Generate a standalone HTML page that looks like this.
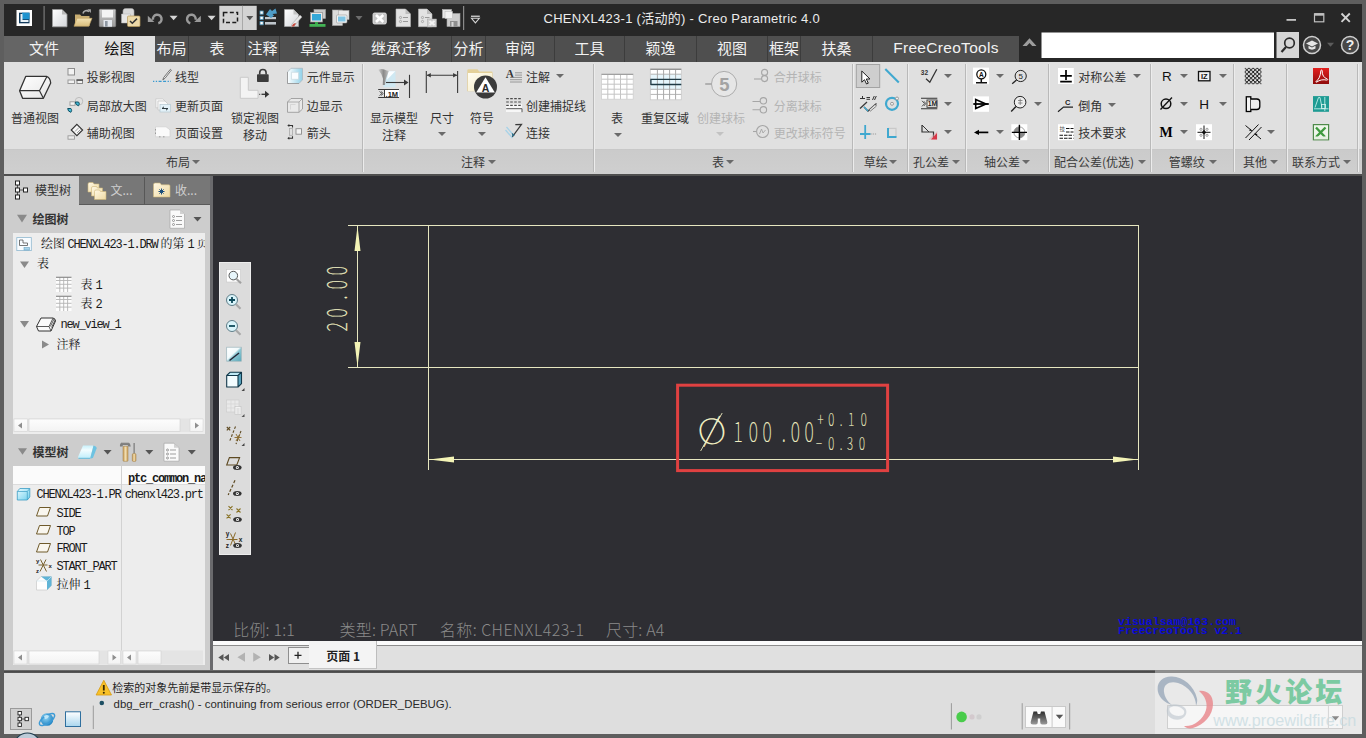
<!DOCTYPE html>
<html lang="zh-CN">
<head>
<meta charset="utf-8">
<title>CHENXL423-1 - Creo Parametric 4.0</title>
<style>
html,body{margin:0;padding:0;}
body{width:1366px;height:738px;overflow:hidden;background:#5e5e5e;position:relative;
 font-family:"Noto Sans CJK SC","Liberation Sans",sans-serif;font-size:12px;color:#222;}
.a{position:absolute;}
.t{position:absolute;white-space:nowrap;line-height:1;}
.ui{font-family:"Noto Sans CJK SC","Liberation Sans",sans-serif;}
.lat{font-family:"Liberation Sans","Noto Sans CJK SC",sans-serif;}
.song{font-family:"Liberation Mono","Noto Serif CJK SC",serif;}
svg{position:absolute;overflow:visible;}
/* title bar */
#title{left:4px;top:4px;width:1358px;height:58px;background:#272727;}
#tabs{left:4px;top:36px;width:1015px;height:26px;background:#4f4f4f;}
.tab{position:absolute;top:0;height:26px;color:#f2f2f2;font-size:15px;line-height:23.5px;text-align:center;white-space:nowrap;border-left:1px solid #3c3c3c;box-sizing:border-box;}
.tab.on{background:#e0e0e0;color:#111;border-left:none;}
/* ribbon */
#ribbon{left:4px;top:62px;width:1358px;height:87px;background:#e0e0e0;}
#rlabel{left:4px;top:149px;width:1358px;height:24.8px;background:linear-gradient(#c6c6c6 0,#cbcbcb 1.5px,#cfcfcf);}
#gap{left:4px;top:173.8px;width:1358px;height:2.2px;background:#4f4f4f;}
.sep{position:absolute;top:64px;width:1px;height:108px;background:#b9b9b9;}
.rt{position:absolute;white-space:nowrap;line-height:1;font-size:12px;color:#333;margin-top:.6px;}
.rt.dis{color:#b4b4b4;}
.gl{position:absolute;white-space:nowrap;line-height:1;font-size:12px;color:#3a3a3a;top:155.5px;}
.dd{position:absolute;width:0;height:0;border-left:4px solid transparent;border-right:4px solid transparent;border-top:4px solid #6a6a6a;}
.dds{position:absolute;width:0;height:0;border-left:3.5px solid transparent;border-right:3.5px solid transparent;border-top:4px solid #777;}
/* left panel */
#panel{left:4px;top:176px;width:205.5px;height:494px;background:#cdcdcd;}
.tree{position:absolute;background:#ededed;}
.tr{position:absolute;white-space:nowrap;line-height:1;font-size:12px;color:#1a1a1a;}
.mono{font-family:"Liberation Mono",monospace;letter-spacing:-1.2px;font-size:12px;}
/* drawing */
#draw{left:213.3px;top:176px;width:1148.7px;height:465px;background:#2e2e33;}
#sheet{left:213.3px;top:641px;width:1148.7px;height:29px;background:linear-gradient(#fbfbfb 0,#fbfbfb 3.7px,#8c8c8c 3.7px,#8c8c8c 5px,#e0e0e0 5px);}
#status{left:4px;top:673px;width:1358px;height:61px;background:#dedede;}
#hline{left:4px;top:669.8px;width:1358px;height:3.2px;background:linear-gradient(#7a7a7a,#484848 45%,#5a5a5a);}
</style>
</head>
<body>
<!-- TITLE BAR -->
<div class="a" id="title"></div>
<div class="t lat" style="left:543.5px;top:11.5px;font-size:13px;letter-spacing:.29px;color:#ececec;">CHENXL423-1 (活动的) - Creo Parametric 4.0</div>

<!--TITLE-ICONS-START-->
<svg class="a" style="left:0;top:0" width="1366" height="62" viewBox="0 0 1366 62">
 <defs>
  <linearGradient id="gpage" x1="0" y1="0" x2="1" y2="1"><stop offset="0" stop-color="#ffffff"/><stop offset="1" stop-color="#d4d6da"/></linearGradient>
  <linearGradient id="gfold" x1="0" y1="0" x2="0" y2="1"><stop offset="0" stop-color="#f3e2b3"/><stop offset="1" stop-color="#d9bd7c"/></linearGradient>
  <linearGradient id="gflop" x1="0" y1="0" x2="0" y2="1"><stop offset="0" stop-color="#c9c9c9"/><stop offset="1" stop-color="#9a9a9a"/></linearGradient>
 </defs>
 <!-- app icon -->
 <rect x="16.5" y="10" width="15.5" height="16" fill="#fdfdfd"/>
 <rect x="19" y="12.7" width="10.5" height="10.6" fill="#113a5c"/>
 <rect x="22" y="12.7" width="7.5" height="6.6" fill="#1f93cf"/>
 <path d="M20.5 14v8h8v-2h-6v-6z" fill="#e9f2f8"/>
 <rect x="43.5" y="6" width="1.2" height="24" fill="#7a7a7a"/>
 <!-- new -->
 <path d="M52.5 9.5h9.5l5 5v12.3h-14.5z" fill="url(#gpage)" stroke="#9c9c9c" stroke-width=".8"/>
 <path d="M62 9.5v5h5z" fill="#b9b9b9"/>
 <!-- open -->
 <path d="M75 14.5h5l1.5 1.5h8v10h-14.5z" fill="#c9ae72"/>
 <path d="M74 26.3l3-8h15l-3.2 8z" fill="url(#gfold)" stroke="#c2a565" stroke-width=".6"/>
 <path d="M83 13.5c.5-3 4-3.8 6-1.8" fill="none" stroke="#a9a9a9" stroke-width="1.6"/>
 <path d="M87.3 9.3h3.6v3.6z" fill="#a9a9a9"/>
 <!-- save -->
 <rect x="99.3" y="9.3" width="16.4" height="17.4" rx="1" fill="url(#gflop)" stroke="#8a8a8a" stroke-width=".6"/>
 <rect x="102" y="10" width="11" height="7.5" fill="#f4f4f4"/>
 <rect x="103.5" y="20" width="8.5" height="6.7" fill="#e4e8ee"/>
 <rect x="105" y="21" width="2.6" height="5.7" fill="#8f98a3"/>
 <!-- save copy -->
 <path d="M123 11c0-1.500 1-2.500 2.500-2.500h6c1.500 0 2.500 1 2.500 2.500v9h-11z" fill="#d9d9d9" stroke="#a8a8a8" stroke-width=".6"/>
 <path d="M121.500 14h9v9h-9z" fill="#e6e6e6" stroke="#b0b0b0" stroke-width=".5"/>
 <rect x="127.500" y="16" width="12.500" height="10.500" rx="1" fill="#ecd9a8" stroke="#b79a5a" stroke-width=".7"/>
 <path d="M130 21l2.300 2.300l4.700-4.700" fill="none" stroke="#333" stroke-width="1.500"/>
 <!-- undo -->
 <path d="M153 19.800A4.300 4.300 0 1 1 158.300 23.200" fill="none" stroke="#9a9a9a" stroke-width="2.500"/>
 <path d="M147.800 15.800v6.200h6.600z" fill="#9a9a9a"/>
 <path d="M169.600 15.800h8l-4 4.500z" fill="#d6d6d6"/>
 <!-- redo -->
 <path d="M195.600 19.800A4.300 4.300 0 1 0 190.300 23.200" fill="none" stroke="#9a9a9a" stroke-width="2.500"/>
 <path d="M200.800 15.800v6.200h-6.600z" fill="#9a9a9a"/>
 <path d="M207.600 15.800h8l-4 4.500z" fill="#d6d6d6"/>
 <!-- select box -->
 <rect x="219.300" y="5.800" width="37.400" height="24.200" fill="#d3d3d3"/>
 <rect x="242" y="5.800" width="1" height="24.200" fill="#a9a9a9"/>
 <rect x="223.500" y="12.500" width="14" height="10" fill="none" stroke="#1d1d1d" stroke-width="1.500" stroke-dasharray="4 2.300"/>
 <path d="M246.300 16h7l-3.500 4.200z" fill="#555"/>
 <!-- regen -->
 <g>
  <rect x="260" y="11" width="3.200" height="3.200" fill="#fff" stroke="#4a8fb5" stroke-width=".8"/>
  <rect x="260" y="16.300" width="3.200" height="3.200" fill="#fff" stroke="#4a8fb5" stroke-width=".8"/>
  <rect x="260" y="21.600" width="3.200" height="3.200" fill="#fff" stroke="#4a8fb5" stroke-width=".8"/>
  <rect x="265" y="17" width="11" height="2.200" fill="#bfc6cc"/>
  <rect x="265" y="22" width="11" height="2.600" fill="#bfc6cc"/>
  <path d="M266 14.500l4-5.500l2 2l3.500-2.500l1.500 5l-4.500.5l1.500 1.500l-3 2.500z" fill="#4e9cc6"/>
 </g>
 <!-- doc pen -->
 <path d="M284.500 9.500h9l5 5v12h-14z" fill="url(#gpage)" stroke="#a5a5a5" stroke-width=".7"/>
 <path d="M293.500 9.500v5h5z" fill="#c4c4c4"/>
 <path d="M292 24l8-9l2 2l-8 9l-3 1z" fill="#e8e8e8" stroke="#999" stroke-width=".5"/>
 <path d="M291.500 26.500c1.500-3 3-4 4.500-3l-2 3z" fill="#c6493c"/>
 <!-- monitor -->
 <rect x="314" y="9.500" width="11.500" height="9" fill="#c9c9c9" stroke="#a2a2a2" stroke-width=".6"/>
 <rect x="310.500" y="12.500" width="12" height="9.500" fill="#e9e9e9" stroke="#8f8f8f" stroke-width=".7"/>
 <rect x="312" y="14" width="9" height="6.500" fill="#35a8d8"/>
 <rect x="315" y="22" width="3" height="2" fill="#3aa84a"/>
 <rect x="309.500" y="24" width="16" height="2.800" fill="#43b455"/>
 <!-- windows -->
 <rect x="332.500" y="10" width="10" height="15.500" fill="#dcdcdc" stroke="#aaa" stroke-width=".6"/>
 <rect x="338.500" y="10.500" width="10.500" height="9" fill="#e9e9e9" stroke="#aaa" stroke-width=".6"/>
 <rect x="336.500" y="15" width="10.500" height="8" rx="1" fill="#f4f4f4" stroke="#999" stroke-width=".6"/>
 <rect x="338" y="16.500" width="7.500" height="5" fill="#7fc4e4"/>
 <path d="M355.500 16h7l-3.500 4.200z" fill="#6c6c6c"/>
 <!-- x box -->
 <rect x="373" y="13" width="13.300" height="11" rx="1.500" fill="#c4c4c4" stroke="#ededed" stroke-width=".8"/>
 <path d="M376 15l7.300 7M383.300 15l-7.300 7" stroke="#fff" stroke-width="2.600"/>
 <!-- doc list -->
 <path d="M396 9h9.500l5 5v12.700h-14.500z" fill="#e2e2e2" stroke="#b5b5b5" stroke-width=".6"/>
 <path d="M405.500 9v5h5z" fill="#bdbdbd"/>
 <circle cx="400.500" cy="17.500" r="1.100" fill="none" stroke="#888" stroke-width=".6"/><rect x="403" y="17" width="5" height="1" fill="#999"/>
 <circle cx="400.500" cy="21.500" r="1.100" fill="none" stroke="#888" stroke-width=".6"/><rect x="403" y="21" width="5" height="1" fill="#999"/>
 <!-- doc2 -->
 <path d="M418.500 9h8.500l5 5v12.700h-13.500z" fill="#e2e2e2" stroke="#b5b5b5" stroke-width=".6"/>
 <path d="M427 9v5h5z" fill="#bdbdbd"/>
 <circle cx="422.500" cy="17.500" r="1.100" fill="none" stroke="#888" stroke-width=".6"/><rect x="425" y="17" width="4.500" height="1" fill="#999"/>
 <circle cx="422.500" cy="21.500" r="1.100" fill="none" stroke="#888" stroke-width=".6"/>
 <rect x="427.500" y="19" width="9" height="8" fill="#cfcfcf" stroke="#a5a5a5" stroke-width=".5"/>
 <path d="M429.500 21l5 4M434.500 21l-5 4" stroke="#f4f4f4" stroke-width="2"/>
 <!-- save3 -->
 <rect x="442.500" y="9.500" width="9" height="8.500" fill="#e8e8e8" stroke="#b5b5b5" stroke-width=".6"/>
 <rect x="447" y="13.500" width="13" height="13" fill="#cdcdcd" stroke="#a5a5a5" stroke-width=".6"/>
 <rect x="445" y="11.500" width="7.500" height="7" fill="#f1f1f1" stroke="#b5b5b5" stroke-width=".5"/>
 <rect x="450" y="21" width="7.500" height="5.500" fill="#8f8f8f"/>
 <rect x="451.500" y="22" width="2" height="4.500" fill="#d9d9d9"/>
 <rect x="463" y="6" width="1.200" height="24" fill="#8a8a8a"/>
 <!-- customize -->
 <rect x="471" y="15.600" width="8.800" height="1.300" fill="#d5d5d5"/>
 <path d="M471.500 18.300h7.800l-3.900 4.500z" fill="none" stroke="#d5d5d5" stroke-width="1.100"/>
 <!-- window buttons -->
 <rect x="1286.500" y="19" width="9.500" height="1.800" fill="#c4c4c4"/>
 <rect x="1314.500" y="13.800" width="9.300" height="8" fill="none" stroke="#c0c0c0" stroke-width="1.200"/>
 <rect x="1314.500" y="13.300" width="9.300" height="2.400" fill="#c0c0c0"/>
 <path d="M1341.500 13.500l8.300 8.300M1349.800 13.500l-8.300 8.300" stroke="#d2d2d2" stroke-width="1.900"/>
 <!-- collapse chevron -->
 <path d="M1022.500 46l7-7.800l7 7.800h-4.300l-2.700-3l-2.700 3z" fill="#9c9c9c"/>
 <!-- search -->
 <rect x="1041.500" y="32.500" width="232.500" height="25.500" fill="#ffffff"/>
 <rect x="1276.500" y="32" width="22.500" height="26" fill="#d6d6d6"/>
 <circle cx="1289.500" cy="43" r="4.800" fill="none" stroke="#2b2b2b" stroke-width="1.700"/>
 <path d="M1286 47l-4.500 5" stroke="#2b2b2b" stroke-width="2.200"/>
 <!-- grad cap -->
 <circle cx="1312" cy="45" r="8.500" fill="#484848" stroke="#cfcfcf" stroke-width="1.500"/>
 <path d="M1306 43.500l6-3l6 3l-6 3z" fill="#e6e6e6"/>
 <path d="M1308.500 45.800v2.700c2 1.500 5 1.500 7 0v-2.700l-3.500 1.700z" fill="#e6e6e6"/>
 <path d="M1327 42.800h7l-3.500 4z" fill="#5c5c5c"/>
 <!-- help -->
 <circle cx="1350" cy="45" r="8.500" fill="#484848" stroke="#cfcfcf" stroke-width="1.500"/>
 <text x="1350" y="50" font-family="Liberation Sans, sans-serif" font-weight="bold" font-size="14" fill="#f0f0f0" text-anchor="middle">?</text>
</svg>
<!--TITLE-ICONS-END-->
<!-- TABS -->
<div class="a" id="tabs">
 <div class="tab" style="left:0;width:80px;border-left:none;background:#656565;">文件</div>
 <div class="tab on" style="left:80px;width:71px;">绘图</div>
 <div class="tab" style="left:151px;width:33px;border-left:none;">布局</div>
 <div class="tab" style="left:184px;width:57px;">表</div>
 <div class="tab" style="left:241px;width:34px;">注释</div>
 <div class="tab" style="left:275px;width:71px;">草绘</div>
 <div class="tab" style="left:346px;width:101px;">继承迁移</div>
 <div class="tab" style="left:447px;width:34px;">分析</div>
 <div class="tab" style="left:481px;width:69px;">审阅</div>
 <div class="tab" style="left:550px;width:70px;">工具</div>
 <div class="tab" style="left:620px;width:72px;">颖逸</div>
 <div class="tab" style="left:692px;width:71px;">视图</div>
 <div class="tab" style="left:763px;width:33px;">框架</div>
 <div class="tab" style="left:796px;width:72px;">扶桑</div>
 <div class="tab lat" style="left:868px;width:147px;font-size:15.5px;letter-spacing:.3px;">FreeCreoTools</div>
</div>

<!-- RIBBON -->
<div class="a" id="ribbon"></div>
<div class="a" id="rlabel"></div>
<div class="a" id="gap"></div>
<!--RTEXT-START-->
<div class="sep" style="left:362.3px;"></div><div class="sep" style="left:363.3px;background:#ececec;"></div>
<div class="sep" style="left:593.0px;"></div><div class="sep" style="left:594.0px;background:#ececec;"></div>
<div class="sep" style="left:852.0px;"></div><div class="sep" style="left:853.0px;background:#ececec;"></div>
<div class="sep" style="left:907.0px;"></div><div class="sep" style="left:908.0px;background:#ececec;"></div>
<div class="sep" style="left:965.0px;"></div><div class="sep" style="left:966.0px;background:#ececec;"></div>
<div class="sep" style="left:1048.0px;"></div><div class="sep" style="left:1049.0px;background:#ececec;"></div>
<div class="sep" style="left:1150.2px;"></div><div class="sep" style="left:1151.2px;background:#ececec;"></div>
<div class="sep" style="left:1233.2px;"></div><div class="sep" style="left:1234.2px;background:#ececec;"></div>
<div class="sep" style="left:1285.8px;"></div><div class="sep" style="left:1286.8px;background:#ececec;"></div>
<div class="sep" style="left:1356.5px;"></div><div class="sep" style="left:1357.5px;background:#ececec;"></div>
<div class="rt" style="left:11px;top:111.2px;">普通视图</div>
<div class="rt" style="left:86.7px;top:70.4px;">投影视图</div>
<div class="rt" style="left:86.7px;top:99.1px;">局部放大图</div>
<div class="rt" style="left:86.7px;top:126.3px;">辅助视图</div>
<div class="rt" style="left:175px;top:70.4px;">线型</div>
<div class="rt" style="left:175px;top:99.1px;">更新页面</div>
<div class="rt" style="left:175px;top:126.3px;">页面设置</div>
<div class="rt" style="left:231px;top:111.2px;">锁定视图</div>
<div class="rt" style="left:243px;top:128.2px;">移动</div>
<div class="rt" style="left:306.7px;top:70.4px;">元件显示</div>
<div class="rt" style="left:306.7px;top:99.1px;">边显示</div>
<div class="rt" style="left:306.7px;top:126.3px;">箭头</div>
<div class="rt" style="left:370px;top:111.2px;">显示模型</div>
<div class="rt" style="left:382px;top:128.2px;">注释</div>
<div class="rt" style="left:430px;top:111.2px;">尺寸</div>
<div class="dd" style="left:437.6px;top:132.0px;"></div>
<div class="rt" style="left:470px;top:111.2px;">符号</div>
<div class="dd" style="left:477.5px;top:132.0px;"></div>
<div class="rt" style="left:526px;top:70.4px;">注解</div>
<div class="dd" style="left:556.3px;top:74.0px;"></div>
<div class="rt" style="left:526px;top:99.1px;">创建捕捉线</div>
<div class="rt" style="left:526px;top:126.3px;">连接</div>
<div class="rt" style="left:611px;top:111.6px;">表</div>
<div class="dd" style="left:614.3px;top:132.7px;"></div>
<div class="rt" style="left:641px;top:111.3px;">重复区域</div>
<div class="rt dis" style="left:697px;top:111.3px;">创建球标</div>
<div class="dd" style="left:716.4px;top:131.5px;border-top-color:#c2c2c2;"></div>
<div class="rt dis" style="left:773.8px;top:70.4px;">合并球标</div>
<div class="rt dis" style="left:773.8px;top:99.1px;">分离球标</div>
<div class="rt dis" style="left:773.8px;top:126.3px;">更改球标符号</div>
<div class="rt" style="left:1078.2px;top:70.4px;">对称公差</div>
<div class="dd" style="left:1132.5px;top:74.0px;"></div>
<div class="rt" style="left:1078.2px;top:99.1px;">倒角</div>
<div class="dd" style="left:1107.8px;top:102.5px;"></div>
<div class="rt" style="left:1078.2px;top:126.3px;">技术要求</div>
<div class="gl" style="left:166px;">布局</div>
<div class="dd" style="left:192.0px;top:160.0px;"></div>
<div class="gl" style="left:461px;">注释</div>
<div class="dd" style="left:487.7px;top:160.0px;"></div>
<div class="gl" style="left:712px;">表</div>
<div class="dd" style="left:726.3px;top:160.0px;"></div>
<div class="gl" style="left:863.8px;">草绘</div>
<div class="dd" style="left:889.4px;top:160.0px;"></div>
<div class="gl" style="left:913px;">孔公差</div>
<div class="dd" style="left:952.3px;top:160.0px;"></div>
<div class="gl" style="left:984px;">轴公差</div>
<div class="dd" style="left:1022.4px;top:160.0px;"></div>
<div class="gl" style="left:1054px;">配合公差(优选)</div>
<div class="dd" style="left:1137.5px;top:160.0px;"></div>
<div class="gl" style="left:1168.7px;">管螺纹</div>
<div class="dd" style="left:1208.6px;top:160.0px;"></div>
<div class="gl" style="left:1243px;">其他</div>
<div class="dd" style="left:1269.5px;top:160.0px;"></div>
<div class="gl" style="left:1292px;">联系方式</div>
<div class="dd" style="left:1343.0px;top:160.0px;"></div>
<div class="dd" style="left:943.6px;top:73.7px;"></div>
<div class="dd" style="left:943.6px;top:101.8px;"></div>
<div class="dd" style="left:943.6px;top:129.8px;"></div>
<div class="dd" style="left:995.5px;top:73.7px;"></div>
<div class="dd" style="left:1033.6px;top:101.8px;"></div>
<div class="dd" style="left:995.5px;top:129.8px;"></div>
<div class="dd" style="left:1180.4px;top:73.7px;"></div>
<div class="dd" style="left:1218.8px;top:73.7px;"></div>
<div class="dd" style="left:1180.4px;top:101.8px;"></div>
<div class="dd" style="left:1218.8px;top:101.8px;"></div>
<div class="dd" style="left:1180.4px;top:129.8px;"></div>
<div class="dd" style="left:1267.4px;top:129.8px;"></div>
<!--RTEXT-END-->
<!--RICON1-START-->
<svg class="a" style="left:0;top:0" width="1366" height="176" viewBox="0 0 1366 176">
 <defs>
  <linearGradient id="gbox" x1="0" y1="0" x2="1" y2="1"><stop offset="0" stop-color="#ffffff"/><stop offset="1" stop-color="#e6e6e6"/></linearGradient>
  <linearGradient id="gcube" x1="0" y1="0" x2="1" y2="0"><stop offset="0" stop-color="#ffffff"/><stop offset="1" stop-color="#8fd0e8"/></linearGradient>
  <linearGradient id="gfun" x1="0" y1="0" x2="1" y2="0"><stop offset="0" stop-color="#d0d0d0"/><stop offset=".5" stop-color="#8a8a8a"/><stop offset="1" stop-color="#c4c4c4"/></linearGradient>
  <linearGradient id="gfolder" x1="0" y1="0" x2="1" y2="1"><stop offset="0" stop-color="#fffdf2"/><stop offset="1" stop-color="#f3e8c2"/></linearGradient>
 </defs>
 <!-- 普通视图 box -->
 <path d="M25.700 76.400L46.500 76.400Q50.200 77.500 50.700 83L43.400 98.300L22.600 98.300L19.600 90.700Z" fill="url(#gbox)" stroke="#333" stroke-width="1.300" stroke-linejoin="round"/>
 <path d="M19.600 90.700L39.500 90.700L46.800 76.800M39.500 90.700L43.400 98.300" fill="none" stroke="#333" stroke-width="1.200"/>
 <!-- 投影视图 -->
 <rect x="68" y="68.500" width="6.500" height="6.500" fill="#f2f2f2" stroke="#8d8d8d" stroke-width="1"/>
 <rect x="68" y="80" width="6.500" height="3.500" fill="#f2f2f2" stroke="#9a9a9a" stroke-width="1"/>
 <rect x="77" y="80" width="5.500" height="3.500" fill="#f2f2f2" stroke="#8a8a8a" stroke-width="1"/>
 <rect x="76.500" y="79.300" width="6.500" height="1.600" fill="#555"/>
 <!-- 局部放大图 -->
 <rect x="70" y="101.800" width="5" height="3.500" fill="#f4f4f4" stroke="#999" stroke-width=".9"/>
 <circle cx="79" cy="101.200" r="3.800" fill="none" stroke="#b9b9b9" stroke-width=".9"/>
 <path d="M75.300 102h3.200c1 1.300 1 2.500 0 3.800q-3.200-.8-3.200-3.800z" fill="#45bad6" stroke="#0e4f63" stroke-width="1"/>
 <path d="M67.700 108.500h3.200c1 1.300 1 2.500 0 3.800q-3.200-.8-3.200-3.800z" fill="#45bad6" stroke="#0e4f63" stroke-width="1"/>
 <!-- 辅助视图 -->
 <path d="M76.900 124.300l5.700 5.700l-5.700 5.700l-5.700-5.700z" fill="#f6f6f6" stroke="#2f2f2f" stroke-width="1.100"/>
 <path d="M75 131.500l4-4M77 133l3.500-3.500" stroke="#777" stroke-width=".7"/>
 <rect x="68" y="135.800" width="6.500" height="3.400" fill="#ececec" stroke="#9a9a9a" stroke-width=".9"/>
 <!-- 线型 -->
 <path d="M153 81.300h18" stroke="#3a9ad0" stroke-width="1.300" stroke-dasharray="1.300 1.500 1.300 1.500 3 1.500 3 1.500"/>
 <path d="M162.800 79.800l1-2.500l6.600-8l1 .8l-6.400 8.200z" fill="#f1f1f1" stroke="#555" stroke-width=".8"/>
 <!-- 更新页面 -->
 <path d="M155.800 98.800h7l2.500 2.500v6.500h-9.500z" fill="#f5f5f5" stroke="#c5c5c5" stroke-width=".7"/>
 <path d="M158 101h7l2.500 2.500v6.500h-9.500z" fill="#f9f9f9" stroke="#c2c2c2" stroke-width=".7"/>
 <rect x="160" y="104.500" width="10.500" height="7.500" fill="#e3f1f8" stroke="#b5c8d2" stroke-width=".7"/>
 <path d="M162 108.500h6M162 108.500l2-1.700M168 108.500l-2 1.700" stroke="#2e3a40" stroke-width="1" fill="none"/>
 <!-- 页面设置 -->
 <path d="M155.500 126.800h10.500l4 3v7h-14.500z" fill="#fafafa" stroke="#cfcfcf" stroke-width=".7"/>
 <path d="M155.500 129v1.500M155.500 132.500v1.500M159 136.800h1.500M163 136.800h1.500" stroke="#9a9a9a" stroke-width="1"/>
 <!-- 锁定视图移动 -->
 <path d="M240.300 77.300h8v13h9.700v8h-17.700z" fill="#f3f3f3" stroke="#c6c6c6" stroke-width=".9"/>
 <rect x="257" y="74.300" width="11.700" height="7.800" rx=".8" fill="#3b3b3b"/>
 <path d="M259.700 74.500v-1.800a3.200 3.200 0 0 1 6.400 0v1.800" fill="none" stroke="#3b3b3b" stroke-width="1.600"/>
 <path d="M259.200 94.300h2" stroke="#555" stroke-width="1.200" stroke-dasharray="1 1"/>
 <path d="M261.500 94.300h5" stroke="#333" stroke-width="1.300"/>
 <path d="M265 90.800l4.300 3.500l-4.300 3.500z" fill="#333"/>
 <!-- 元件显示 -->
 <path d="M287.500 72l3.500-3.700h11.500v11.500l-3.500 3.700h-11.500z" fill="url(#gcube)" stroke="#a9b9c0" stroke-width=".8"/>
 <path d="M291.500 72.300h7v7h-7z" fill="#fafdff" stroke="#c5d5dc" stroke-width=".6"/>
 <path d="M287.500 72v11.500h11.500" fill="none" stroke="#9a9a9a" stroke-width=".9"/>
 <!-- 边显示 -->
 <path d="M287.500 102l3.500-3.500h11.500v10.500l-3.500 3.300h-11.500z" fill="#e9e9e9" stroke="#9c9c9c" stroke-width=".9"/>
 <path d="M287.500 102h11.500v10.300M299 102l3.500-3.500" fill="none" stroke="#9c9c9c" stroke-width=".8"/>
 <path d="M290.500 109.500v-5h5" fill="none" stroke="#cfcfcf" stroke-width=".7"/>
 <!-- 箭头 -->
 <path d="M288.300 125.500h4.200v2M288.300 138.300h4.200v-2" fill="none" stroke="#333" stroke-width="1.100"/>
 <path d="M287.300 125.500l2-1.500v3zM287.300 138.300l2-1.500v3z" fill="#333"/>
 <rect x="289.500" y="128.500" width="3" height="6.800" fill="none" stroke="#aaa" stroke-width=".8"/>
 <rect x="296" y="128.700" width="5.500" height="5.500" fill="#f4f4f4" stroke="#8c8c8c" stroke-width=".9"/>
 <!-- 显示模型注释 -->
 <path d="M383.500 71h12v16.300h-12z" fill="#cfe8f2"/>
 <path d="M388.300 71.300h7l-8.300 8.500z" fill="#fafdff"/>
 <path d="M378.300 69.800q3-1.500 6-.3q2.500 1 4.500 1.500l-3 8l-.8 6h-2.300l.3-6.300q-1.500-5.500-4.700-8.900z" fill="url(#gfun)"/>
 <path d="M386 82.500h20" stroke="#3a3a3a" stroke-width="1.100"/>
 <path d="M404 79.500l4.500 3l-4.500 3z" fill="#3a3a3a"/>
 <path d="M409.500 74.800v23.200" stroke="#3a3a3a" stroke-width="1.100"/>
 <rect x="385" y="90" width="14" height="7" fill="#ffffff"/>
 <path d="M378.200 89.500h20.800M378.200 97.500h20.800M384.500 89.500v8" stroke="#3a3a3a" stroke-width="1"/>
 <path d="M379.500 91.500l2.500 2l-2.500 2M381.500 91.500l1.500 2l-1.500 2" fill="none" stroke="#333" stroke-width=".8"/>
 <text x="385.600" y="96.500" font-family="Liberation Sans, sans-serif" font-weight="bold" font-size="7.500" fill="#222">.1M</text>
 <!-- 尺寸 -->
 <path d="M426.300 71v22M457.600 71v22M427 75.200h30" stroke="#3a3a3a" stroke-width="1.100"/>
 <path d="M426.800 75.200l4-2.300v4.600zM457.100 75.200l-4-2.300v4.600z" fill="#3a3a3a"/>
 <!-- 符号 -->
 <path d="M467.300 70.500q0-1.200 1.200-1.200h9l1.700 2.200h12.200q1.200 0 1.200 1.200v18.600h-25.300z" fill="#e4d19a"/>
 <path d="M468 73h24v18h-24z" fill="url(#gfolder)"/>
 <circle cx="485.500" cy="87" r="11.500" fill="#3b3b3b"/>
 <path d="M485.500 77.300l9.300 15.200h-18.600z" fill="#ffffff"/>
 <text x="485.500" y="92" font-family="Liberation Sans, sans-serif" font-weight="bold" font-size="10.500" fill="#2b2b2b" text-anchor="middle">A</text>
 <!-- 注解 -->
 <text x="505.800" y="77.500" font-family="Liberation Serif, serif" font-weight="bold" font-size="11.500" fill="#333">A</text>
 <path d="M515 72.800h7M515 75.100h7M510 77.400h12M510 79.700h12M510 82h12" stroke="#8e8e8e" stroke-width=".9"/>
 <!-- 创建捕捉线 -->
 <rect x="506" y="104" width="16" height="8" fill="#f7f7f7"/>
 <path d="M506.200 98.600h16M506.200 102h16M506.200 105.400h16" stroke="#4a4a4a" stroke-width="1.100" stroke-dasharray="2.600 1.400"/>
 <path d="M506.200 108.700h15.800v3.500" fill="none" stroke="#555" stroke-width="1"/>
 <!-- 连接 -->
 <path d="M505.500 130l7 8M506.500 127l6 7" stroke="#a8d3e8" stroke-width="1.300" fill="none"/>
 <path d="M515.300 124.700l6.200-.3l-9.200 12.400" fill="none" stroke="#3b3b3b" stroke-width="1.200"/>
 <path d="M512.300 136.800l-.5-4l3.200 2.300z" fill="#2f6f8a"/>
</svg>
<!--RICON1-END-->
<!--RICON2-START-->
<svg class="a" style="left:0;top:0" width="1366" height="176" viewBox="0 0 1366 176">
 <!-- 表 grid -->
 <rect x="601.500" y="74.200" width="31.700" height="25" fill="#ffffff"/>
 <path d="M601.500 79.200h31.700M601.500 84.200h31.700M601.500 89.200h31.700M601.500 94.200h31.700M607.800 75v24.200M614.200 75v24.200M620.500 75v24.200M626.900 75v24.200" stroke="#c4c4c4" stroke-width="1"/>
 <rect x="601.500" y="74.200" width="31.700" height="25" fill="none" stroke="#cfcfcf" stroke-width=".8"/>
 <path d="M601.500 74.400h31.700" stroke="#a0a0a0" stroke-width="1.300"/>
 <!-- 重复区域 grid -->
 <rect x="650.300" y="69" width="31" height="30.800" fill="#ffffff"/>
 <rect x="650.300" y="74.200" width="31" height="15.100" fill="#e6f6fc"/>
 <path d="M650.300 74.200h31M650.300 89.300h31M650.300 94.400h31" stroke="#b4b4b4" stroke-width="1"/>
 <path d="M657.400 69.500v30.300M663.600 69.500v30.300M669.600 69.500v30.300M675.600 69.500v30.300" stroke="#a8a8a8" stroke-width="1"/>
 <rect x="650.300" y="69" width="31" height="30.800" fill="none" stroke="#c9c9c9" stroke-width=".8"/>
 <path d="M650.300 69.300h31" stroke="#8f8f8f" stroke-width="1.300"/>
 <path d="M650.900 79.400h30.400M650.900 84.500h30.400M650.900 78.800v6.300" fill="none" stroke="#1f3a44" stroke-width="1.300"/>
 <!-- 创建球标 -->
 <circle cx="724.100" cy="84" r="12.600" fill="#e6e6e6" stroke="#acacac" stroke-width="1"/>
 <path d="M705.200 84h6.300" stroke="#a0a0a0" stroke-width="1.500"/>
 <text x="724.300" y="90.600" font-family="Liberation Sans, sans-serif" font-weight="bold" font-size="18.500" fill="#a3a3a3" text-anchor="middle">5</text>
 <!-- 合并球标 etc -->
 <g fill="none" stroke="#a6a6a6" stroke-width="1.100">
  <circle cx="764.600" cy="72.400" r="3"/><circle cx="764.600" cy="78.600" r="3"/><path d="M754 79h7.500"/>
  <circle cx="763.400" cy="100.800" r="3.200"/><circle cx="763.400" cy="109.800" r="3.200"/><path d="M752.500 101.500h7.700M752.500 109.800h7.700"/>
  <circle cx="762.600" cy="131.500" r="6"/><path d="M753 131.500h3.600"/><path d="M759.500 134l2-5l1.500 4l2.500-3" stroke-width=".9"/>
 </g>
 <!-- 草绘 group -->
 <rect x="856.300" y="64.500" width="23.400" height="23" fill="#cecece" stroke="#a3a3a3" stroke-width="1"/>
 <path d="M861.800 71v11.200l2.700-2.500l2 4.300l1.800-.8l-2-4.200h3.700z" fill="#ffffff" stroke="#222" stroke-width="1" stroke-linejoin="round"/>
 <path d="M885.300 69l13.500 13.500" stroke="#3fa8cf" stroke-width="2"/>
 <!-- constraint -->
 <path d="M860 98.500h5M862.500 96v2.500M866.500 97.500h3.500M866.500 99.300h3.500M872.500 100l1.800-4M874.500 100l1.800-4" stroke="#333" stroke-width="1" fill="none"/>
 <path d="M860 108.500l7-6.500M864 107l4 4l8.500-7.500" stroke="#3a3a3a" stroke-width="1.300" fill="none"/>
 <path d="M864 107l4 4" stroke="#3fa8cf" stroke-width="1.300"/>
 <path d="M869 110l6-5.500l1.500 1.500l-6 5z" fill="#e9e9e9" stroke="#555" stroke-width=".7"/>
 <!-- circle -->
 <circle cx="892" cy="103.800" r="6" fill="none" stroke="#3fa8cf" stroke-width="2.200"/>
 <circle cx="892" cy="103.800" r="1.500" fill="#f0f0f0" stroke="#8a8a8a" stroke-width=".8"/>
 <circle cx="897" cy="98.500" r="1.500" fill="#f0f0f0" stroke="#8a8a8a" stroke-width=".8"/>
 <!-- cross -->
 <path d="M865.200 125v14M860 134h10.500" stroke="#3fa8cf" stroke-width="1.800"/>
 <path d="M870.500 134h6" stroke="#9a9a9a" stroke-width="1" stroke-dasharray="1.200 1"/>
 <!-- square -->
 <path d="M888 128.300h8v8.600" fill="none" stroke="#c9c9c9" stroke-width="1.200"/>
 <path d="M888 128v9h8.500" fill="none" stroke="#3fa8cf" stroke-width="2"/>
 <!-- 孔公差 -->
 <text x="920.800" y="75" font-family="Liberation Sans, sans-serif" font-weight="bold" font-size="6.500" fill="#333">32</text>
 <path d="M926 78.800l3.800 3.400l7-13" fill="none" stroke="#333" stroke-width="1.300"/>
 <path d="M921 98.300h16.300M921 108.800h16.300" stroke="#333" stroke-width="1.100"/>
 <rect x="927" y="100" width="10" height="7.300" fill="#f4f4f4" stroke="#333" stroke-width=".9"/>
 <path d="M922 100.800l2.500 2.800l-2.500 2.800M924 101.300l1.800 2.300l-1.800 2.300" fill="none" stroke="#333" stroke-width=".8"/>
 <text x="927.800" y="106.300" font-family="Liberation Sans, sans-serif" font-weight="bold" font-size="6.800" fill="#222">1M</text>
 <path d="M922 125v7h11.500v7" fill="none" stroke="#333" stroke-width="1.200"/>
 <path d="M922 125l7 7" stroke="#333" stroke-width="1"/>
 <path d="M937.300 131v8.500h-9z" fill="#e3a0a8" opacity=".5"/>
 <path d="M937 133v6.500h-6z" fill="#d83848"/>
 <!-- 轴公差 -->
 <rect x="973" y="67.600" width="16" height="16.600" fill="#ffffff"/>
 <circle cx="981.300" cy="74.300" r="4.500" fill="none" stroke="#111" stroke-width="1.300"/>
 <text x="981.300" y="76.800" font-family="Liberation Sans, sans-serif" font-weight="bold" font-size="6.500" fill="#111" text-anchor="middle">A</text>
 <path d="M981.300 79v3.600M976 82.800h11" stroke="#111" stroke-width="1.500"/>
 <circle cx="1020.700" cy="76" r="5.600" fill="none" stroke="#222" stroke-width="1"/>
 <text x="1020.700" y="79" font-family="Liberation Sans, sans-serif" font-size="8" fill="#222" text-anchor="middle">5</text>
 <path d="M1016.500 80l-4.300 3.800" stroke="#222" stroke-width="1.300"/>
 <rect x="973" y="96.400" width="16" height="15.400" fill="#ffffff"/>
 <path d="M973.300 104h15.500" stroke="#000" stroke-width="1.800"/>
 <path d="M975.700 99.500v9l10.300-4.500z" fill="none" stroke="#000" stroke-width="1.600"/>
 <circle cx="1020.100" cy="102.200" r="5.800" fill="#efefef" stroke="#222" stroke-width="1"/>
 <path d="M1018 100.500h4.500M1018 103h4.500M1020.200 98.500v6.500" stroke="#777" stroke-width=".8"/>
 <path d="M1016 106.500l-4.800 5" stroke="#222" stroke-width="1.400"/>
 <path d="M976 132.400h12.300" stroke="#000" stroke-width="1.700"/>
 <path d="M974 132.400l5-2.600v5.200z" fill="#000"/>
 <rect x="1011.300" y="124.200" width="16" height="16" fill="#ffffff"/>
 <path d="M1019.400 132.400v-5.500a5.500 5.500 0 0 0-5.500 5.500zM1019.400 132.400v5.500a5.500 5.500 0 0 0 5.500-5.500z" fill="#8a8a8a"/>
 <circle cx="1019.400" cy="132.400" r="5.500" fill="none" stroke="#8a8a8a" stroke-width=".8"/>
 <path d="M1019.400 124.800v15.200M1011.800 132.400h15.200" stroke="#000" stroke-width="1.400"/>
 <!-- 配合公差 -->
 <rect x="1058" y="68" width="15.800" height="16" fill="#ffffff"/>
 <path d="M1066 70v10M1060.200 75.800h11.600M1060.200 81.600h11.600" stroke="#000" stroke-width="1.700"/>
 <path d="M1058 111.800l5.500-4.700h9.500" fill="none" stroke="#222" stroke-width="1.200"/>
 <text x="1065" y="104.500" font-family="Liberation Sans, sans-serif" font-weight="bold" font-size="7.500" fill="#222">C</text>
 <rect x="1058" y="124.200" width="16" height="16" fill="#ffffff"/>
 <text x="1059.500" y="131" font-family="Liberation Sans, Noto Sans CJK SC, sans-serif" font-size="5.500" fill="#555">技</text>
 <path d="M1066 128.500h7.500M1066 132h7.500M1059.500 135.300h14M1059.500 138.300h14" stroke="#111" stroke-width="1.100" stroke-dasharray="3.500 1"/>
 <!-- 管螺纹 -->
 <text x="1162" y="81" font-family="Liberation Sans, sans-serif" font-size="13.500" fill="#111">R</text>
 <rect x="1198.500" y="71.500" width="11.500" height="9.300" fill="#f2f2f2" stroke="#111" stroke-width="1.300"/>
 <text x="1204.300" y="79" font-family="Liberation Sans, sans-serif" font-weight="bold" font-size="7.500" fill="#111" text-anchor="middle">IZ</text>
 <circle cx="1166" cy="103.800" r="4.800" fill="none" stroke="#111" stroke-width="1.500"/>
 <path d="M1160.500 109.500l11.500-12" stroke="#111" stroke-width="1.300"/>
 <text x="1199.300" y="108.600" font-family="Liberation Sans, sans-serif" font-size="13.500" fill="#111">H</text>
 <text x="1159.600" y="136.600" font-family="Liberation Serif, serif" font-weight="bold" font-size="14" fill="#000">M</text>
 <rect x="1196" y="124.200" width="16" height="16" fill="#ffffff"/>
 <path d="M1204 125.500v13.500M1197.500 132.300h13" stroke="#111" stroke-width="1"/>
 <path d="M1204 130.300v4M1202 132.300h4" stroke="#111" stroke-width="1.800"/>
 <g fill="none" stroke="#777" stroke-width=".7"><circle cx="1201" cy="129.300" r="1.100"/><circle cx="1207" cy="129.300" r="1.100"/><circle cx="1201" cy="135.300" r="1.100"/><circle cx="1207" cy="135.300" r="1.100"/></g>
 <!-- 其他 -->
 <defs><pattern id="chk" x="1244.800" y="67.900" width="4.150" height="4.080" patternUnits="userSpaceOnUse"><rect width="4.150" height="4.080" fill="#fff"/><path d="M0 0L4.150 4.080M4.150 0L0 4.080" stroke="#000" stroke-width=".85"/></pattern></defs>
 <rect x="1244.800" y="67.900" width="16.600" height="16.300" fill="url(#chk)"/>
 <rect x="1246.300" y="96.800" width="4.500" height="14.700" fill="#f4f4f4" stroke="#000" stroke-width="1.300"/>
 <path d="M1250.800 99h6q3 0 3 3v4.500q0 3-3 3h-6" fill="#ececec" stroke="#000" stroke-width="1.300"/>
 <path d="M1245.500 138l13-13.500M1249 140l12.500-13" stroke="#111" stroke-width="1"/>
 <path d="M1245.500 125.500l6 5M1261 139l-6-5" stroke="#111" stroke-width="1"/>
 <path d="M1252.300 131.300l-3.300-.8l1.500-1.800zM1254.300 133.200l3.300.8l-1.500 1.800z" fill="#111"/>
 <!-- 联系方式 -->
 <linearGradient id="gpdf" x1="0" y1="0" x2="0" y2="1"><stop offset="0" stop-color="#e3201e"/><stop offset="1" stop-color="#8f0b0b"/></linearGradient>
 <rect x="1313" y="68" width="16" height="16" fill="url(#gpdf)"/>
 <path d="M1316 81.500c3-2 4.500-6 4.800-10.500c.2-1.500 1.500-1.300 1.400 0c-.3 4 2 7 5 8c1 .4.500 1.300-.5 1.100c-3.500-.8-7-.3-10 2c-.8.500-1.300-.2-.7-.6z" fill="none" stroke="#fff" stroke-width="1"/>
 <rect x="1313" y="96.100" width="16" height="15.700" fill="#1e9b93"/>
 <path d="M1315 107.500l3.500-10h1.500l2 10M1314 108.800h14.500M1324.800 97v14" fill="none" stroke="#aee6e0" stroke-width="1"/>
 <rect x="1321.500" y="104.500" width="4" height="4" fill="none" stroke="#d9f5f1" stroke-width=".8"/>
 <rect x="1313.400" y="124.600" width="15.200" height="15.200" fill="#eef5ea" stroke="#4e8a4a" stroke-width="1.200"/>
 <path d="M1316 127.500l9 9.500M1325.500 127.500l-9.500 9.500" stroke="#3f9a3f" stroke-width="2.400"/>
 <rect x="1314" y="136.500" width="14" height="2.800" fill="#e6efe2"/>
</svg>
<!--RICON2-END-->


<!-- LEFT PANEL -->
<div class="a" style="left:209.5px;top:176px;width:4px;height:494px;background:#6a6a6d;"></div>
<div class="a" id="panel"></div>
<!--PANEL-START-->
<!-- panel tabs -->
<div class="a" style="left:79px;top:176px;width:130.500px;height:28.500px;background:#777;"></div>
<div class="a" style="left:144px;top:177px;width:1px;height:27px;background:#575757;"></div>
<div class="a" style="left:79px;top:203.500px;width:130.500px;height:1px;background:#5a5a5a;"></div>
<div class="t ui" style="left:35px;top:183.800px;font-size:12px;color:#333;">模型树</div>
<div class="t ui" style="left:110.500px;top:183.800px;font-size:12px;color:#cfcfcf;">文...</div>
<div class="t ui" style="left:175px;top:183.800px;font-size:12px;color:#cfcfcf;">收...</div>
<div class="t ui" style="left:32.500px;top:212.800px;font-size:12px;font-weight:bold;color:#333;">绘图树</div>
<div class="t ui" style="left:32.500px;top:445.600px;font-size:12px;font-weight:bold;color:#333;">模型树</div>
<!-- trees -->
<div class="tree" style="left:12.500px;top:232.500px;width:192.500px;height:201px;"></div>
<div class="tree" style="left:12.500px;top:466px;width:192.500px;height:198.500px;overflow:hidden;">
 <div class="a" style="left:0;top:0;width:192.500px;height:18.500px;background:#fbfbfb;border-bottom:1px solid #dcdcdc;box-sizing:border-box;"></div>
 <div class="a" style="left:108.500px;top:0;width:1px;height:185px;background:#d2d2d2;"></div>
</div>
<svg class="a" style="left:0;top:0" width="215" height="738" viewBox="0 0 215 738">
 <defs>
  <linearGradient id="gfd" x1="0" y1="0" x2="1" y2="1"><stop offset="0" stop-color="#fff8e4"/><stop offset="1" stop-color="#eed9a2"/></linearGradient>
  <linearGradient id="gcy" x1="0" y1="0" x2="1" y2="1"><stop offset="0" stop-color="#e9fbff"/><stop offset="1" stop-color="#6fd0ee"/></linearGradient>
  <linearGradient id="ghandle" x1="0" y1="0" x2="1" y2="0"><stop offset="0" stop-color="#c89c58"/><stop offset=".5" stop-color="#f0dcae"/><stop offset="1" stop-color="#c89c58"/></linearGradient>
  <linearGradient id="gslab" x1="0" y1="0" x2="0" y2="1"><stop offset="0" stop-color="#c9f1fb"/><stop offset=".35" stop-color="#f2fdff"/><stop offset="1" stop-color="#bfeefa"/></linearGradient>
  <linearGradient id="gsb" x1="0" y1="0" x2="0" y2="1"><stop offset="0" stop-color="#fdfdfd"/><stop offset="1" stop-color="#f3f3f3"/></linearGradient>
 </defs>
 <!-- tab1 icon -->
 <g fill="#fff" stroke="#222" stroke-width="1">
  <path d="M17.500 185v10M19.500 190h4" fill="none" stroke="#444" stroke-width=".9"/>
  <rect x="15.500" y="181" width="4" height="4"/><rect x="15.500" y="188" width="4" height="4"/><rect x="15.500" y="195" width="4" height="4"/><rect x="23.500" y="188" width="4" height="4"/>
 </g>
 <!-- tab2 folders -->
 <g stroke="#cdb678" stroke-width=".6">
  <path d="M88 184q0-1.500 1.500-1.500h3.500l1 1.500h5v8h-11z" fill="url(#gfd)"/>
  <path d="M91.500 188q0-1.500 1.500-1.500h3.500l1 1.500h5v8h-11z" fill="url(#gfd)"/>
  <path d="M94.500 191.500q0-1.500 1.500-1.500h3.500l1 1.500h5.500v8h-11.500z" fill="url(#gfd)"/>
 </g>
 <!-- tab3 folder -->
 <path d="M153.500 184.500q0-1.500 1.500-1.500h5l1.300 1.800h7.500q1.200 0 1.200 1.200v11h-16.500z" fill="url(#gfd)" stroke="#cdb678" stroke-width=".6"/>
 <path d="M161.500 188.500v6M158.500 191.500h6M159.400 189.400l4.200 4.200M163.600 189.400l-4.200 4.200" stroke="#1c4f7c" stroke-width="1"/>
 <!-- header1 -->
 <path d="M17 214.800h10l-5 7.600z" fill="#8a8a8a"/>
 <path d="M170 210h10l4.500 4v14.300h-14.500z" fill="#fafafa" stroke="#a8a8a8" stroke-width=".7"/>
 <path d="M180 210v4h4.500z" fill="#d2d2d2"/>
 <g fill="none" stroke="#777" stroke-width=".7"><circle cx="173.500" cy="216.500" r="1"/><circle cx="173.500" cy="220.500" r="1"/><circle cx="173.500" cy="224.500" r="1"/><path d="M176 216.500h6M176 220.500h6M176 224.500h6"/></g>
 <path d="M193.500 217h8l-4 4.500z" fill="#555"/>
 <!-- tree1 row icons -->
 <rect x="16.800" y="237.600" width="14.500" height="13" fill="#f8fcff" stroke="#8fb8d0" stroke-width=".8"/>
 <path d="M19.500 240v5.500h8v-2.500h-4.500v-3z" fill="none" stroke="#555" stroke-width=".8"/>
 <rect x="24" y="247.500" width="5.500" height="2.500" fill="#a9d4ea" stroke="#5a96b8" stroke-width=".5"/>
 <path d="M20 261.500h9l-4.500 6.500z" fill="#8a8a8a"/>
 <g id="tbl1"><rect x="56" y="277" width="15.500" height="15" fill="#fdfdfd"/><path d="M56 280.500h15.500M56 284.300h15.500M56 288.100h15.500M59.800 277v15M63.700 277v15M67.600 277v15" stroke="#b4b4b4" stroke-width=".9"/><path d="M56 277.300h15.500" stroke="#8c8c8c" stroke-width="1.200"/></g>
 <g><rect x="56" y="296" width="15.500" height="15" fill="#fdfdfd"/><path d="M56 299.500h15.500M56 303.300h15.500M56 307.100h15.500M59.800 296v15M63.700 296v15M67.600 296v15" stroke="#b4b4b4" stroke-width=".9"/><path d="M56 296.300h15.500" stroke="#8c8c8c" stroke-width="1.200"/></g>
 <path d="M20 321h9l-4.500 6.500z" fill="#8a8a8a"/>
 <path d="M41 318h12q2.300.5 2.500 3l-4.500 10h-12.500l-2-4.500z" fill="#fbfbfb" stroke="#333" stroke-width="1" stroke-linejoin="round"/>
 <path d="M36.500 326.500h12.500l4-8.300M49 326.500l2 4.500M50.300 326.500l4-8M51.500 327.500l3.700-7.500" fill="none" stroke="#333" stroke-width=".8"/>
 <path d="M42 340.500v8l7-4z" fill="#8a8a8a"/>
 <!-- scrollbar 1 -->
 <rect x="13.500" y="418.500" width="189.500" height="13.500" fill="#e4e4e4"/>
 <rect x="14" y="419" width="13.500" height="12.500" fill="url(#gsb)" stroke="#d0d0d0" stroke-width=".5"/>
 <rect x="29" y="419" width="151" height="12.500" fill="url(#gsb)" stroke="#cfcfcf" stroke-width=".6"/>
 <rect x="190" y="419" width="13" height="12.500" fill="url(#gsb)" stroke="#d0d0d0" stroke-width=".5"/>
 <path d="M22 422.500v6l-4-3zM195 422.500v6l4-3z" fill="#8e8e8e"/>
 <!-- header2 -->
 <path d="M18 448.300h9l-4.500 6.500z" fill="#8a8a8a"/>
 <path d="M83 445.600h10.500l-3.300 12.800h-11.400q-1.200-.4-.6-1.800z" fill="url(#gslab)"/>
 <path d="M93.500 445.600q3 .8 3.300 2.300l-3.600 9.300q-.8 1.300-3 1.200z" fill="#6ec3e2"/>
 <path d="M78.500 458.300h11.700" stroke="#58b4d6" stroke-width=".9" fill="none"/>
 <path d="M103.600 450h8l-4 4.500z" fill="#555"/>
 <path d="M120 446.500q-.5-3 2-4.300h6.500q2 1.300 2.300 4.300h-3v-1.500h-5v1.500z" fill="#7e7e7e"/>
 <path d="M121.500 442.600h7.500" stroke="#c4c4c4" stroke-width=".8"/>
 <rect x="123" y="446.300" width="5" height="15" rx=".8" fill="url(#ghandle)" stroke="#9c7a40" stroke-width=".5"/>
 <rect x="133.400" y="443" width="1.500" height="10.800" fill="#8a8a8a"/>
 <rect x="132.300" y="453.500" width="3.700" height="8" rx="1.200" fill="url(#ghandle)" stroke="#9c7a40" stroke-width=".5"/>
 <path d="M145.300 450h8l-4 4.500z" fill="#555"/>
 <path d="M164 443.200h10l5 4.500v13.500h-15z" fill="#fafafa" stroke="#a8a8a8" stroke-width=".7"/>
 <path d="M174 443.200v4.500h5z" fill="#d2d2d2"/>
 <g fill="none" stroke="#777" stroke-width=".7"><circle cx="167.500" cy="450" r="1"/><circle cx="167.500" cy="454" r="1"/><circle cx="167.500" cy="458" r="1"/><path d="M170 450h6M170 454h6M170 458h6"/></g>
 <path d="M187.800 450h8l-4 4.500z" fill="#555"/>
 <!-- tree2 icons -->
 <path d="M17.300 491.500l2.500-3h10v8.500l-2.500 3h-10z" fill="url(#gcy)" stroke="#3a9cc4" stroke-width=".8"/>
 <path d="M17.300 491.500h10v8.500M27.300 491.500l2.500-3" fill="none" stroke="#3a9cc4" stroke-width=".7"/>
 <g fill="#f9f6ee" stroke="#6f5a2a" stroke-width="1"><path d="M39.500 507.500h11l-3 8.500h-11z"/><path d="M39.500 525.500h11l-3 8.500h-11z"/><path d="M39.500 543.500h11l-3 8.500h-11z"/></g>
 <path d="M38.500 565h9M40 571.500l6-12M40.500 559.500l6 12" stroke="#7a6330" stroke-width="1" fill="none"/>
 <text x="36" y="563" font-family="Liberation Sans, sans-serif" font-weight="bold" font-size="6" fill="#222">y</text>
 <text x="36" y="573" font-family="Liberation Sans, sans-serif" font-weight="bold" font-size="6" fill="#222">z</text>
 <text x="48.500" y="568" font-family="Liberation Sans, sans-serif" font-weight="bold" font-size="6" fill="#222">x</text>
 <path d="M36.500 581l4.500-4.500h10.500v9l-4.500 4.500h-10.500z" fill="#fdfdfd" stroke="#c9c9c9" stroke-width=".7"/>
 <path d="M41 576.500h10.500v9l-4.500 4.500v-9z" fill="#5fb4d6"/>
 <path d="M36.500 581h10.500l4.500-4.500" fill="none" stroke="#d0e8f2" stroke-width=".7"/>
 <!-- scrollbars 2 -->
 <rect x="13.500" y="650.500" width="189.500" height="14" fill="#e4e4e4"/>
 <rect x="14" y="651" width="13" height="13" fill="url(#gsb)" stroke="#d0d0d0" stroke-width=".5"/>
 <rect x="29" y="651" width="70" height="13" fill="url(#gsb)" stroke="#cfcfcf" stroke-width=".6"/>
 <rect x="108" y="651" width="12.500" height="13" fill="url(#gsb)" stroke="#d0d0d0" stroke-width=".5"/>
 <rect x="123" y="651" width="13" height="13" fill="url(#gsb)" stroke="#d0d0d0" stroke-width=".5"/>
 <rect x="138" y="651" width="23" height="13" fill="url(#gsb)" stroke="#cfcfcf" stroke-width=".6"/>
 <path d="M22 654.500v6l-4-3zM112.500 654.500v6l4-3zM131 654.500v6l-4-3z" fill="#8e8e8e"/>
</svg>
<!-- tree texts -->
<div class="tr song" style="left:41px;top:238.500px;">绘图</div>
<div class="tr song mono" style="left:67.500px;top:238.500px;">CHENXL423-1.DRW</div>
<div class="tr song" style="left:160.500px;top:238.500px;">的第</div>
<div class="tr song mono" style="left:187.500px;top:238.500px;">1</div>
<div class="tr song" style="left:196.500px;top:238.500px;width:8.500px;overflow:hidden;">页</div>
<div class="tr song" style="left:37px;top:259.300px;">表</div>
<div class="tr song" style="left:80.500px;top:279.500px;">表<span class="mono" style="margin-left:3px">1</span></div>
<div class="tr song" style="left:80.500px;top:299.300px;">表<span class="mono" style="margin-left:3px">2</span></div>
<div class="tr song mono" style="left:60.500px;top:318.500px;">new_view_1</div>
<div class="tr song" style="left:56.500px;top:339.500px;">注释</div>
<div class="tr song mono" style="left:128px;top:472.500px;font-weight:bold;width:77px;overflow:hidden;">ptc_common_name</div>
<div class="tr song mono" style="left:36.500px;top:489.200px;">CHENXL423-1.PR</div>
<div class="tr song mono" style="left:124.700px;top:489.200px;">chenxl423.prt</div>
<div class="tr song mono" style="left:56.500px;top:507.500px;">SIDE</div>
<div class="tr song mono" style="left:56.500px;top:525.500px;">TOP</div>
<div class="tr song mono" style="left:56.500px;top:543.300px;">FRONT</div>
<div class="tr song mono" style="left:56.500px;top:561.300px;">START_PART</div>
<div class="tr song" style="left:56.500px;top:579.500px;">拉伸<span class="mono" style="margin-left:3px">1</span></div>
<!--PANEL-END-->


<!-- DRAWING -->
<div class="a" id="draw"></div>
<!--DRAW-START-->
<svg class="a" style="left:0;top:0" width="1366" height="645" viewBox="0 0 1366 645">
 <g stroke="#e6e6c0" stroke-width="1" fill="none" shape-rendering="crispEdges">
  <path d="M348 225.500H1139M348 367.500H1139M428.500 225V469.500M1138.500 225V469.500M357.500 226V367M429 459.500H1138"/>
 </g>
 <g fill="#f3f3b6">
  <path d="M357.500 226l3 25h-6zM357.500 367l3-25h-6zM429 459.500l25-3v6zM1138 459.500l-25-3v6z"/>
 </g>
 <!-- red highlight -->
 <rect x="677.600" y="385.200" width="210" height="85.400" fill="none" stroke="#e04141" stroke-width="3"/>
 <path d="M700.600 451L722.200 413" stroke="#efeec2" stroke-width=".9" fill="none"/>
 <!-- dimension texts -->
 <g font-family="Noto Sans CJK SC, Liberation Sans, sans-serif" font-weight="100" fill="#efeec2" stroke="#efeec2" stroke-width=".22">
  <text transform="rotate(-14 711.800 431.700) translate(697 444) scale(1.15 .97)" font-size="36" x="0" y="0" stroke="none">Ø</text>
  <text transform="translate(0 441.700) scale(.62 .98)" font-size="28.500" y="0" x="1183 1207.500 1229.800 1261 1275.500 1297.700">100.00</text>
  <text transform="translate(0 425.800) scale(.62 .98)" font-size="18.500" y="0" x="1318.500 1336 1354.500 1368 1388.500">+0.10</text>
  <text transform="translate(0 450.200) scale(.62 .98)" font-size="18.500" y="0" x="1316 1336 1354.500 1366 1385.500">−0.30</text>
  <text transform="translate(347.300 0) rotate(-90) scale(.62 .98)" font-size="28.500" y="0" x="-534.500 -512 -483 -466.500 -444">20.00</text>
 </g>
 <!-- info text -->
 <g font-family="Noto Sans CJK SC, Liberation Sans, sans-serif" font-weight="300" font-size="16" fill="#8a8a8a" letter-spacing=".15">
  <text x="233.300" y="636">比例: 1:1</text>
  <text x="339.600" y="636">类型: PART</text>
  <text x="439.800" y="636" letter-spacing=".45">名称: CHENXL423-1</text>
  <text x="606" y="636">尺寸: A4</text>
 </g>
 <!-- blue text -->
 <g font-family="Liberation Mono, monospace" font-weight="bold" font-size="11.500" fill="#0a0ad8">
  <text x="1118" y="625" textLength="118" lengthAdjust="spacingAndGlyphs">visualsam@163.com</text>
  <text x="1118" y="634" textLength="124" lengthAdjust="spacingAndGlyphs">FreeCreoTools v2.1</text>
 </g>
</svg>
<!-- vertical toolbar -->
<div class="a" style="left:218.500px;top:261.500px;width:32px;height:293px;background:#dcdcdc;border:1px solid #ededed;box-sizing:border-box;"></div>
<!--VTB-START-->
<svg class="a" style="left:0;top:0" width="260" height="560" viewBox="0 0 260 560">
 <defs>
  <linearGradient id="grep" x1="0" y1="0" x2="1" y2="1"><stop offset="0" stop-color="#ffffff"/><stop offset=".45" stop-color="#f2fafc"/><stop offset=".55" stop-color="#8cc6d2"/><stop offset="1" stop-color="#5aa9bb"/></linearGradient>
  <g id="eye"><ellipse cx="0" cy="0" rx="4.300" ry="2.500" fill="#333"/><circle cx="0" cy="0" r="1.500" fill="#fff"/><circle cx="0" cy="0" r=".7" fill="#333"/></g>
 </defs>
 <!-- refit -->
 <rect x="226.500" y="269.500" width="14" height="12.500" fill="#ffffff" stroke="#c9c9c9" stroke-width=".6"/>
 <path d="M236.500 279l4.500 4.300" stroke="#a0a0a0" stroke-width="2.200"/>
 <circle cx="233.300" cy="275.600" r="4.300" fill="#e8f6fb" stroke="#555" stroke-width="1"/>
 <!-- zoom in -->
 <path d="M236 304.300l4.500 4.500" stroke="#a8a8a8" stroke-width="2.200"/>
 <circle cx="232" cy="300" r="5.500" fill="#d9f4fa" stroke="#5f7d88" stroke-width="1"/>
 <path d="M229 300h6M232 297v6" stroke="#0f4a5a" stroke-width="1.800"/>
 <!-- zoom out -->
 <path d="M236 330.300l4.500 4.500" stroke="#a8a8a8" stroke-width="2.200"/>
 <circle cx="232" cy="326" r="5.500" fill="#d9f4fa" stroke="#5f7d88" stroke-width="1"/>
 <path d="M229 326h6" stroke="#0f4a5a" stroke-width="1.800"/>
 <!-- repaint -->
 <rect x="226.700" y="347.200" width="14.600" height="14" fill="url(#grep)" stroke="#9bb5bc" stroke-width=".7"/>
 <path d="M229.500 360.500l9.500-7.500" stroke="#223" stroke-width="1.400"/>
 <!-- cube -->
 <path d="M226.700 375.500l3.500-3.300h11.300v11.500l-3.500 3.300z" fill="#5aa5bf"/>
 <path d="M226.700 375.500l3.500-3.300h11.300l-3.500 3.300z" fill="#bfeaf6"/>
 <rect x="226.700" y="375.500" width="11.300" height="11.500" fill="#f2fcff"/>
 <path d="M226.700 375.500l3.500-3.300h11.300v11.500l-3.500 3.300h-11.300zM226.700 375.500h11.300v11.500M238 375.500l3.500-3.300" fill="none" stroke="#12384a" stroke-width="1.100" stroke-linejoin="round"/>
 <path d="M244.500 388v3h-3z" fill="#444"/>
 <!-- layers (disabled) -->
 <rect x="226.500" y="400" width="12.500" height="12" fill="#e9e9e9" stroke="#cdcdcd" stroke-width=".7"/>
 <path d="M226.500 404h12.500M226.500 408h12.500M231 400v12M235 400v12" stroke="#d6d6d6" stroke-width=".7"/>
 <rect x="235" y="406.500" width="6" height="8" fill="#f2f2f2" stroke="#c2c2c2" stroke-width=".6"/>
 <path d="M236.500 409h3M236.500 411h3M236.500 413h3" stroke="#bbb" stroke-width=".6"/>
 <path d="M244.500 414v3h-3z" fill="#555"/>
 <!-- datum display -->
 <g stroke="#5e4a22" stroke-width="1.100" fill="none">
  <path d="M226.800 427l3.400 3.400M230.200 427l-3.400 3.400"/>
  <path d="M235.500 426.500l-6 15" stroke-dasharray="2.600 1.600"/>
  <path d="M241 431l-5 13" stroke-dasharray="2.600 1.600"/>
  <path d="M234.500 437.500h7M236 434l4 7M240 434l-4 7" stroke="#8a6a2a" stroke-width=".9"/>
 </g>
 <path d="M244.500 443v3h-3z" fill="#444"/>
 <!-- plane eye -->
 <path d="M229.400 457.600h10.200l-2.800 7.400h-10.100z" fill="none" stroke="#5e4a22" stroke-width="1.100"/>
 <use href="#eye" x="237.300" y="467.600"/>
 <!-- axis eye -->
 <path d="M235 480.300l-6.800 14.700" stroke="#5e4a22" stroke-width="1.200" stroke-dasharray="3 1.800" fill="none"/>
 <use href="#eye" x="237.300" y="493.400"/>
 <!-- points eye -->
 <g stroke="#8a7428" stroke-width="1.100"><path d="M228.500 506.200l4 4M232.500 506.200l-4 4M236.500 508.500l4 4M240.500 508.500l-4 4M226.600 514.400l4 4M230.600 514.400l-4 4"/></g>
 <use href="#eye" x="237.500" y="519.600"/>
 <!-- csys eye -->
 <path d="M226.500 539.500h11M230.500 533.500l5 11M235.500 532.500l-5 13" stroke="#8a6a2a" stroke-width="1" fill="none"/>
 <g font-family="Liberation Sans, sans-serif" font-weight="bold" font-size="6.500" fill="#222"><text x="225.800" y="535.500">y</text><text x="225.800" y="547.500">z</text><text x="238.800" y="542">x</text></g>
 <use href="#eye" x="237.500" y="545.500"/>
</svg>
<!--VTB-END-->

<!--DRAW-END-->

<div class="a" id="sheet"></div>
<!--SHEET-START-->
<div class="a" style="left:308.700px;top:641px;width:68.600px;height:28px;background:#f4f4f4;border-right:1px solid #bdbdbd;border-bottom:1px solid #c4c4c4;box-sizing:border-box;"></div>
<div class="t ui" style="left:326.200px;top:649.500px;font-size:12px;font-weight:bold;color:#222;">页面 1</div>
<div class="a" style="left:288px;top:647px;width:21px;height:16.500px;background:#f0f0f0;border:1px solid #8e8e8e;border-right:none;box-sizing:border-box;"></div>
<svg class="a" style="left:0;top:0" width="400" height="672" viewBox="0 0 400 672">
 <path d="M223.500 654v7l-5.200-3.500zM229 654v7l-5.200-3.500z" fill="#555"/>
 <path d="M245 652.500v9.300l-7.600-4.650z" fill="#b2b2b2"/>
 <path d="M253.200 652.500v9.300l7.600-4.650z" fill="#b2b2b2"/>
 <path d="M269 654v7l5.200-3.500zM274.500 654v7l5.200-3.500z" fill="#555"/>
 <path d="M294.500 655.300h7M298 651.800v7" stroke="#222" stroke-width="1.300"/>
</svg>
<!--SHEET-END-->

<div class="a" id="hline"></div>
<div class="a" id="status"></div>
<!--STATUS-START-->
<div class="a" style="left:1155px;top:672px;width:207px;height:62px;background:#e9e9e9;"></div>
<div class="a" style="left:1155px;top:670px;width:207px;height:2.500px;background:#8e8e8e;"></div>
<div class="t ui" style="left:112.300px;top:682.300px;font-size:11px;color:#1e1e1e;">检索的对象先前是带显示保存的。</div>
<div class="t lat" style="left:113.600px;top:698.600px;font-size:11.400px;color:#2a2a2a;">dbg_err_crash() - continuing from serious error (ORDER_DEBUG).</div>
<div class="a" style="left:10px;top:708px;width:22px;height:21.500px;background:#d0d0d0;border:1px solid #9a9a9a;box-sizing:border-box;"></div>
<div class="a" style="left:1025.200px;top:705.500px;width:41px;height:22.500px;background:#fafafa;border:1px solid #c9c9c9;box-sizing:border-box;"></div>
<div class="a" style="left:1167px;top:705.200px;width:176.200px;height:24.200px;background:rgba(250,250,250,.75);border:1px solid #cfcfcf;box-sizing:border-box;"></div>
<div class="t ui" style="left:1225px;top:676.500px;font-size:27px;font-weight:900;letter-spacing:3.100px;color:#7ccaa2;">野火论坛</div>
<div class="t lat" style="left:1213.200px;top:711.500px;font-size:16.200px;color:#c3d9df;opacity:.7;">www.proewildfire.cn</div>
<svg class="a" style="left:0;top:0" width="1366" height="738" viewBox="0 0 1366 738">
 <defs>
  <linearGradient id="gsq" x1="0" y1="0" x2="0" y2="1"><stop offset="0" stop-color="#ffffff"/><stop offset="1" stop-color="#a9d6ee"/></linearGradient>
  <radialGradient id="gglobe" cx=".4" cy=".35" r=".7"><stop offset="0" stop-color="#8fd4f4"/><stop offset="1" stop-color="#1a7fc0"/></radialGradient>
  <linearGradient id="gbino" x1="0" y1="0" x2="0" y2="1"><stop offset="0" stop-color="#2d2d2d"/><stop offset="1" stop-color="#9a9a9a"/></linearGradient>
 </defs>
 <circle cx="27.400" cy="746.200" r="13.200" fill="#bdcbd8" stroke="#1f3d4e" stroke-width="1.200"/>
 <!-- warning -->
 <path d="M103.800 680.300l7.700 14.700h-15.400z" fill="#f8c128" stroke="#d79a10" stroke-width=".8" stroke-linejoin="round"/>
 <path d="M103.800 685v5.500" stroke="#3a2a00" stroke-width="1.800"/><circle cx="103.800" cy="692.800" r="1" fill="#3a2a00"/>
 <circle cx="101.800" cy="703" r="2.300" fill="#1d4f63"/>
 <!-- left status icons -->
 <g fill="#fff" stroke="#222" stroke-width=".9">
  <path d="M19.700 713.500v11M21.500 719h4" fill="none" stroke="#444"/>
  <rect x="18" y="711.500" width="3.400" height="3.400"/><rect x="18" y="717.300" width="3.400" height="3.400"/><rect x="18" y="723" width="3.400" height="3.400"/><rect x="25" y="717.300" width="3.400" height="3.400"/>
 </g>
 <circle cx="47" cy="719.500" r="6.300" fill="url(#gglobe)"/>
 <ellipse cx="47" cy="719.500" rx="9" ry="3.800" fill="none" stroke="#3d9bd6" stroke-width="1.500" transform="rotate(-35 47 719.500)"/>
 <path d="M44 716q3-2 5 0q-1 3-4 3z" fill="#bfe6f8"/>
 <rect x="65.500" y="711.800" width="15" height="14.700" fill="url(#gsq)" stroke="#2f6f9e" stroke-width="1"/>
 <path d="M93.300 705.600v23.500M951.400 703.200v26.300M1022.200 703.200v26.300M1069.700 703.200v26.300" stroke="#9a9a9a" stroke-width="1"/>
 <!-- dots -->
 <circle cx="961.600" cy="716.900" r="5.300" fill="#49cc4b"/>
 <circle cx="972" cy="716.900" r="2.600" fill="#d3c9cd"/><circle cx="979" cy="716.900" r="2.600" fill="#cfcfcf"/>
 <!-- binoculars -->
 <path d="M1052.100 706v21.500" stroke="#c9c9c9" stroke-width="1"/>
 <path d="M1033.500 711.500h3.500l.8 2.500h2.400l.8-2.500h3.500l2.800 10.500q.3 2.500-2.300 2.500h-2.800q-2 0-2-2.500v-3.500h-2.400v3.500q0 2.500-2 2.500h-2.800q-2.600 0-2.300-2.500z" fill="url(#gbino)"/>
 <path d="M1055.800 714.800h7.400l-3.700 4.300z" fill="#555"/>
 <!-- watermark dropdown -->
 <path d="M1328.400 706v23" stroke="#d5d5d5" stroke-width="1"/>
 <path d="M1331.800 716.300h7.400l-3.700 4.300z" fill="#8a8a8a"/>
 <!-- logo -->
 <g opacity=".85">
  <path d="M1158 692c-2-9 4-16 14-15.500c11 .5 22 9 25 22c.5 3 0 5-1 7c0-9-7-19-18-22.500c-8-2.500-15 1-14 9c.5 5 4 10 8 13c-7-2-12.500-7-14-13z" fill="#9fadbd"/>
  <path d="M1199 691c8-1 14 4 14 13c0 11-9 21-20 24c-4 1-7 0-9-2c9 1 19-6 22-16c2-7-1-14-7-19z" fill="#ea8c90"/>
  <path d="M1168 706c5-3 13-2 17 2c3 4 1 9-4 11c-6 2-13-1-14-6c-.5-3 0-5 1-7zm1.500 2c-1 4 3 8 9 8c5 0 7-3 5-6c-3-4-10-5-14-2z" fill="#bcc4cd" opacity=".7"/>
 </g>
</svg>
<!--STATUS-END-->

</body>
</html>
